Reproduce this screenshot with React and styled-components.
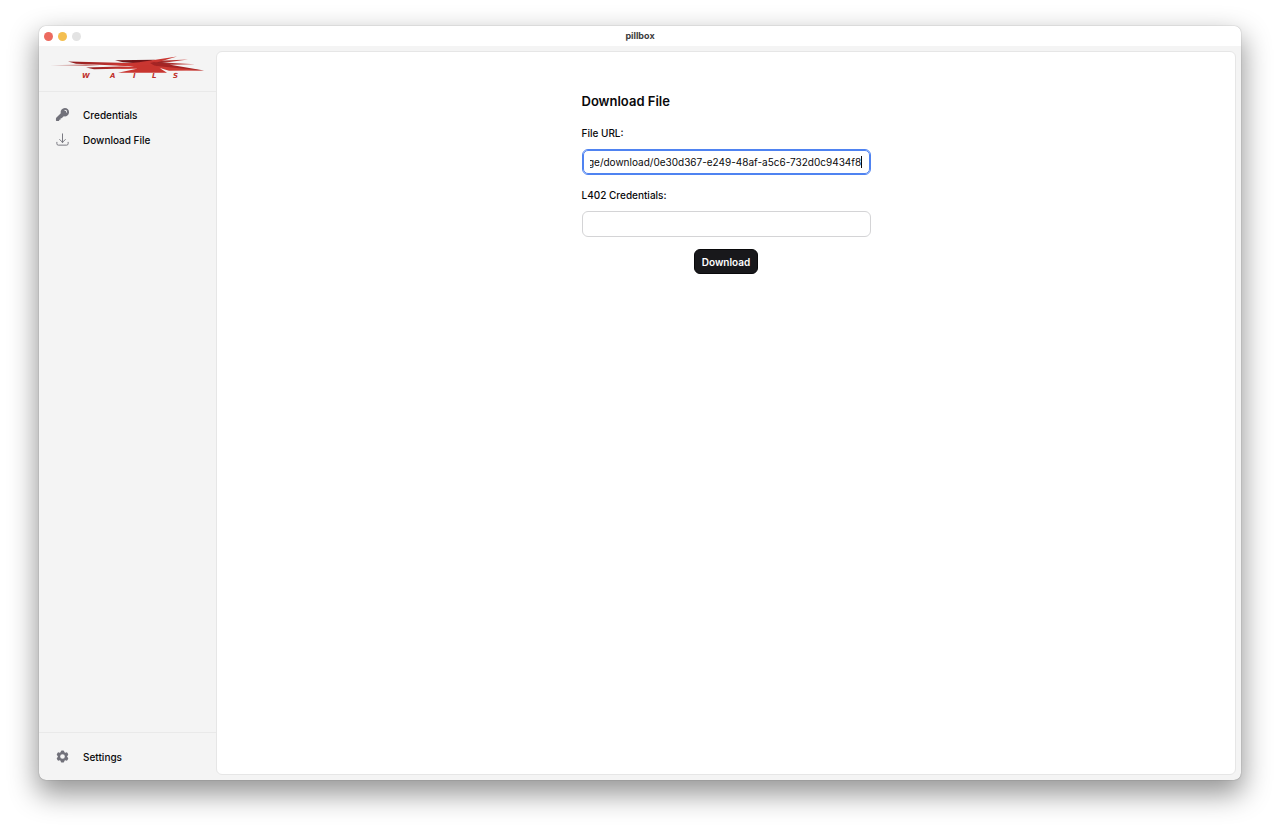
import React, { useEffect, useRef, useState } from 'react';
import styled, { createGlobalStyle } from 'styled-components';
import { HiKey, HiOutlineArrowDownTray, HiCog6Tooth } from 'react-icons/hi2';

const GlobalStyle = createGlobalStyle`
  * {
    box-sizing: border-box;
  }
  body {
    margin: 0;
    background-color: #fff;
    color: #09090b;
    font-family: Inter, sans-serif;
    font-size: 10px;
    line-height: 16px;
  }
`;

const Desktop = styled.div`
  display: flex;
  min-height: 100vh;
  padding: 26px 39px 52px;
  overflow: hidden;
`;

const AppWindow = styled.div`
  flex: 1;
  display: flex;
  flex-direction: column;
  border-radius: 7px;
  background-color: #f4f4f4;
  box-shadow: 0 0 1px rgba(0, 0, 0, 0.5), 0 12px 28px 2px rgba(0, 0, 0, 0.42);
`;

const TitleBar = styled.header`
  display: grid;
  grid-template-columns: 1fr auto 1fr;
  align-items: center;
  height: 20px;
  padding: 0 5px;
  border-radius: 7px 7px 0 0;
  background-color: #fff;
`;

const Lights = styled.div`
  display: flex;
  gap: 5px;
`;

const Light = styled.button`
  width: 9px;
  height: 9px;
  padding: 0;
  border: 0;
  border-radius: 50%;
  background-color: ${props => props.$color};
`;

const WindowTitle = styled.div`
  color: #3c3c3c;
  font-size: 9px;
  font-weight: 700;
`;

const Body = styled.div`
  flex: 1;
  display: flex;
`;

const Sidebar = styled.aside`
  display: flex;
  flex-direction: column;
  width: 177px;
`;

const SidebarHeader = styled.div`
  padding: 9px 11px 10px;
  border-bottom: 1px solid #e9e9e9;
`;

const LogoImage = styled.svg`
  display: block;
  width: 155px;
  height: 26px;
`;

const LogoText = styled.text`
  fill: #c0302b;
  font-family: "DejaVu Sans", sans-serif;
  font-size: 7px;
  font-style: italic;
  font-weight: 700;
`;

const Nav = styled.nav`
  flex: 1;
  padding: 10px 11px;
`;

const SidebarFooter = styled.div`
  padding: 11px;
  border-top: 1px solid #e9e9e9;
`;

const NavItem = styled.a`
  display: flex;
  align-items: center;
  gap: 13px;
  height: 25px;
  padding: 0 5px;
  color: #09090b;
  font-weight: 500;
  text-decoration: none;
  svg {
    width: 15px;
    height: 15px;
    color: #71717a;
  }
`;

const Main = styled.main`
  flex: 1;
  display: flex;
  flex-direction: column;
  align-items: center;
  margin: 5px 5px 5px 0;
  padding: 41px 20px;
  border: 1px solid #e6e6e6;
  border-radius: 6px;
  background-color: #fff;
`;

const Form = styled.form`
  display: flex;
  flex-direction: column;
  width: 100%;
  max-width: 289px;
`;

const Title = styled.h1`
  margin: 0 0 16px;
  font-size: 13px;
  font-weight: 600;
  line-height: 16px;
`;

const Label = styled.label`
  margin-bottom: 8px;
  font-weight: 500;
`;

const Field = styled.div`
  position: relative;
  display: flex;
  margin-bottom: 12px;
`;

const TextInput = styled.input`
  flex: 1;
  min-width: 0;
  height: 26px;
  padding: 0 8px 0 7px;
  border: 1px solid #d4d4d6;
  border-radius: 6px;
  background-color: #fff;
  color: #09090b;
  caret-color: transparent;
  font: inherit;
  &:focus {
    border-color: #4f83f1;
    outline: 1px solid #4f83f1;
    outline-offset: -2px;
  }
`;

// solid cursor, does not blink
const Cursor = styled.span`
  position: absolute;
  top: 7px;
  right: 9px;
  width: 1px;
  height: 12px;
  background-color: #09090b;
`;

const SubmitButton = styled.button`
  align-self: center;
  height: 25px;
  padding: 0 7px;
  border: 1px solid #09090b;
  border-radius: 6px;
  background-color: #18181b;
  color: #fff;
  font: inherit;
  font-weight: 600;
`;

function Logo() {
  return (
    <LogoImage viewBox="50 55 155 26" role="img" aria-label="Wails">
      <defs>
        <linearGradient id="blade" x1="0" x2="1">
          <stop offset="0" stopColor="#8f1c1e" />
          <stop offset="1" stopColor="#d23b35" />
        </linearGradient>
        <linearGradient id="sliver" x1="0" x2="1">
          <stop offset="0" stopColor="#c9a3a2" />
          <stop offset="1" stopColor="#b93a36" />
        </linearGradient>
        <linearGradient id="wing" x1="0" x2="1">
          <stop offset="0" stopColor="#7b1619" />
          <stop offset="1" stopColor="#cf4641" />
        </linearGradient>
      </defs>
      <path fill="url(#sliver)" d="M50 65.2l36-.8 14 .6-14 .8z" />
      <path fill="url(#blade)" d="M68 61.6l52 1.2 14 .8-8 2.4-32-1.6-18-.6z" />
      <path fill="url(#blade)" d="M86 67.4l34-.8 16 .2-6 1.8-36 .6z" />
      <path fill="#711519" d="M115 60.2l40-.4-12 4-20-1.6z" />
      <path fill="url(#wing)" d="M140 61.5l48-1.9-26 3.4-22 2z" />
      <path fill="url(#wing)" d="M142 63.5l12-1.5 41 2.2-24 .6-16 3.2z" />
      <path fill="#c93631" d="M111 64.4l28-2.2 38-5.6-21 6.2 5 6h-45l18-2.4z" />
      <path fill="#a42424" d="M150 63l4-1 50 8.6-35-1.2-14-3.4z" />
      <path fill="#cc3b34" d="M156 66l48 4.6-35 .2-10-3z" />
      <path fill="#c8352f" d="M118 72.8l19-4-1-3h20l11 7z" />
      <LogoText x="82 110 133 152 173" y="78">WAILS</LogoText>
    </LogoImage>
  );
}

function DownloadForm() {
  const [fileUrl, setFileUrl] = useState('/storage/download/0e30d367-e249-48af-a5c6-732d0c9434f8');
  const [credentials, setCredentials] = useState('');
  const urlInput = useRef(null);

  // start with the cursor at the end of the url
  useEffect(() => {
    const input = urlInput.current;
    input.focus();
    input.setSelectionRange(input.value.length, input.value.length);
    input.scrollLeft = input.scrollWidth;
  }, []);

  return (
    <Form onSubmit={e => e.preventDefault()}>
      <Title>Download File</Title>
      <Label htmlFor="file-url">File URL:</Label>
      <Field>
        <TextInput id="file-url" ref={urlInput} value={fileUrl} onChange={e => setFileUrl(e.target.value)} />
        <Cursor />
      </Field>
      <Label htmlFor="credentials">L402 Credentials:</Label>
      <Field>
        <TextInput id="credentials" value={credentials} onChange={e => setCredentials(e.target.value)} />
      </Field>
      <SubmitButton type="submit">Download</SubmitButton>
    </Form>
  );
}

function App() {
  return (
    <>
      <GlobalStyle />
      <Desktop>
        <AppWindow>
          <TitleBar>
            <Lights>
              <Light $color="#ec6a5f" aria-label="Close" />
              <Light $color="#f4bf50" aria-label="Minimize" />
              <Light $color="#e3e3e3" aria-label="Zoom" disabled />
            </Lights>
            <WindowTitle>pillbox</WindowTitle>
          </TitleBar>
          <Body>
            <Sidebar>
              <SidebarHeader>
                <Logo />
              </SidebarHeader>
              <Nav>
                <NavItem href="#credentials"><HiKey />Credentials</NavItem>
                <NavItem href="#download"><HiOutlineArrowDownTray />Download File</NavItem>
              </Nav>
              <SidebarFooter>
                <NavItem href="#settings"><HiCog6Tooth />Settings</NavItem>
              </SidebarFooter>
            </Sidebar>
            <Main>
              <DownloadForm />
            </Main>
          </Body>
        </AppWindow>
      </Desktop>
    </>
  );
}

export default App;
